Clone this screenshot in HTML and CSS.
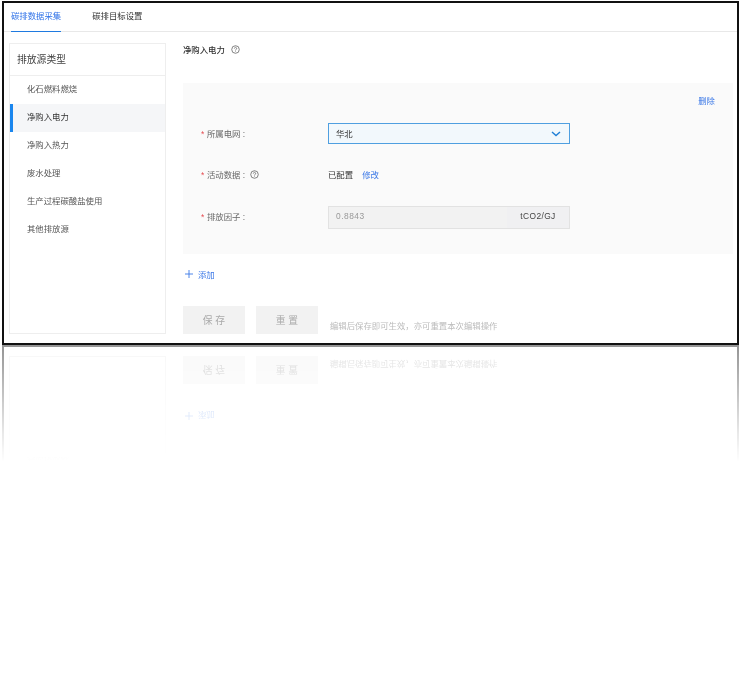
FILE: index.html
```html
<!DOCTYPE html>
<html lang="en">
<head>
<meta charset="utf-8">
<title>碳排数据采集</title>
<link rel="stylesheet" href="styles.css">
</head>
<body>
<div class="frame" id="frame">
  <nav class="tabs">
    <a class="tab tab-active">碳排数据采集</a>
    <a class="tab">碳排目标设置</a>
  </nav>
  <div class="content">
    <aside class="side">
      <div class="side-head">排放源类型</div>
      <ul class="side-list">
        <li class="side-item">化石燃料燃烧</li>
        <li class="side-item side-item-active">净购入电力</li>
        <li class="side-item">净购入热力</li>
        <li class="side-item">废水处理</li>
        <li class="side-item">生产过程碳酸盐使用</li>
        <li class="side-item">其他排放源</li>
      </ul>
    </aside>
    <main class="main">
      <div class="title-row">
        <h1 class="title">净购入电力</h1>
        <svg class="help help-title" viewBox="0 0 10 10"><circle cx="5" cy="5" r="4.2"/><path d="M3.7 3.9a1.3 1.3 0 1 1 2 1.1c-.5.3-.7.5-.7 1"/><path d="M5 7v.6"/></svg>
      </div>
      <section class="panel">
        <div class="panel-top"><a class="link">删除</a></div>
        <div class="row">
          <div class="label"><span class="star">*</span><span class="label-text">所属电网 :</span></div>
          <div class="select">
            <span class="lift">华北</span>
            <svg class="chevron" viewBox="0 0 10 6"><path d="M1 1l4 3.6L9 1"/></svg>
          </div>
        </div>
        <div class="row">
          <div class="label"><span class="star">*</span><span class="label-text">活动数据 :</span><svg class="help help-label" viewBox="0 0 10 10"><circle cx="5" cy="5" r="4.2"/><path d="M3.7 3.9a1.3 1.3 0 1 1 2 1.1c-.5.3-.7.5-.7 1"/><path d="M5 7v.6"/></svg></div>
          <span class="value lift">已配置</span>
          <a class="link link-edit lift">修改</a>
        </div>
        <div class="row row-tall">
          <div class="label"><span class="star">*</span><span class="label-text">排放因子 :</span></div>
          <div class="input">
            <span class="input-value">0.8843</span>
            <span class="input-unit">tCO2/GJ</span>
          </div>
        </div>
      </section>
      <a class="add">
        <svg class="add-icon" viewBox="0 0 8 8"><path d="M4 0v8M0 4h8"/></svg>
        <span>添加</span>
      </a>
      <div class="actions">
        <button class="btn">保 存</button>
        <button class="btn">重 置</button>
        <span class="hint">编辑后保存即可生效，亦可重置本次编辑操作</span>
      </div>
    </main>
  </div>
</div>
<script src="reflect.js"></script>
</body>
</html>
```
FILE: reflect.js
```js
var frame = document.getElementById('frame');
var mirror = document.createElement('div');
mirror.className = 'reflection';
mirror.setAttribute('aria-hidden', 'true');
var copy = frame.cloneNode(true);
copy.removeAttribute('id');
mirror.appendChild(copy);
frame.parentNode.insertBefore(mirror, frame.nextSibling);
```
FILE: styles.css
```css
* { box-sizing: border-box; }
html, body { margin: 0; padding: 0; background: #fff; }
body {
  font-family: "Liberation Sans", "Noto Sans CJK SC", sans-serif;
  font-size: 8.4px;
  color: #333;
}
.frame {
  width: 737px;
  height: 344px;
  margin: 1px 0 0 2px;
  border: 2px solid #111;
  background: #fff;
  overflow: hidden;
}
.reflection {
  width: 737px;
  height: 344px;
  margin-left: 2px;
  transform: scaleY(-1);
  -webkit-mask-image: linear-gradient(to bottom, transparent 66%, rgba(0, 0, 0, .1) 75%, rgba(0, 0, 0, .45) 100%);
  mask-image: linear-gradient(to bottom, transparent 66%, rgba(0, 0, 0, .1) 75%, rgba(0, 0, 0, .45) 100%);
}
.reflection .frame { margin: 0; }
.tabs, .content { filter: blur(.35px); }
.tabs {
  display: flex;
  gap: 31px;
  height: 29px;
  padding-left: 7px;
  border-bottom: 1px solid #e8e8e8;
}
.tab {
  height: 29px;
  line-height: 27px;
  color: #333;
}
.tab-active {
  color: #2f72e8;
  border-bottom: 1px solid #1f7ae0;
}
.content {
  display: flex;
  padding: 11px 0 0 5px;
}
.side {
  flex: none;
  width: 157px;
  height: 291px;
  border: 1px solid #eee;
}
.side-head {
  height: 32px;
  padding-left: 7px;
  line-height: 31px;
  font-size: 9.8px;
  color: #444;
  border-bottom: 1px solid #eee;
}
.side-list { margin: 0; padding: 0; list-style: none; }
.side-item {
  height: 28px;
  line-height: 27px;
  padding-left: 17px;
  color: #555;
}
.side-item-active {
  background: #f5f6f8;
  border-left: 3px solid #1a86ee;
  padding-left: 14px;
  color: #333;
}
.main { flex: 1; padding-left: 17px; min-width: 0; }
.title-row {
  display: flex;
  align-items: center;
  gap: 6px;
  height: 12px;
}
.title { margin: 0; font-size: 8.4px; font-weight: 500; color: #333; }
.help {
  flex: none;
  fill: none;
  stroke: #555;
  stroke-width: .8;
}
.help-title { width: 9px; height: 9px; }
.help-label { width: 9px; height: 9px; margin-left: 5px; }
.panel {
  width: 550px;
  height: 171px;
  margin-top: 28px;
  padding: 0 18px;
  background: #fafafa;
}
.panel-top {
  display: flex;
  justify-content: flex-end;
  height: 40px;
  padding: 11px 0 0;
}
.link { color: #3b78e7; }
.row {
  display: flex;
  align-items: center;
  height: 21px;
  margin-bottom: 20px;
}
.row:nth-child(3) { margin-bottom: 21px; }
.row-tall { height: 22.5px; margin-bottom: 0; }
.label {
  display: flex;
  align-items: center;
  flex: none;
  width: 127px;
  color: #666;
}
.label-text { padding-bottom: 2px; }
.lift { padding-bottom: 2px; }
.star { width: 6px; color: #e5484d; }
.select {
  display: flex;
  align-items: center;
  justify-content: space-between;
  width: 242px;
  height: 21px;
  padding: 0 8px 0 7px;
  background: #f2f8fc;
  border: 1px solid #4f9fe0;
  color: #333;
}
.chevron {
  width: 10px;
  height: 6px;
  fill: none;
  stroke: #1f7fd6;
  stroke-width: 1.4;
}
.value { color: #333; }
.link-edit { margin-left: 9px; }
.input {
  display: flex;
  width: 242px;
  height: 22.5px;
  background: #f2f2f2;
  border: 1px solid #e2e2e2;
}
.input-value {
  flex: 1;
  padding-left: 7px;
  line-height: 18px;
  letter-spacing: .5px;
  color: #999;
}
.input-unit {
  flex: none;
  width: 62px;
  text-align: center;
  line-height: 18px;
  letter-spacing: .4px;
  background: #f0f0f2;
  color: #444;
}
.add {
  display: flex;
  align-items: center;
  gap: 5px;
  height: 12px;
  margin: 14px 0 0 2px;
  color: #3b78e7;
}
.add-icon {
  width: 8px;
  height: 8px;
  fill: none;
  stroke: #3b78e7;
  stroke-width: .9;
}
.actions {
  display: flex;
  align-items: flex-end;
  gap: 11px;
  margin-top: 26px;
}
.btn {
  width: 62px;
  height: 27.5px;
  padding: 0;
  border: 0;
  background: #f2f2f2;
  color: #aaa;
  font: inherit;
  font-size: 9.8px;
}
.hint { color: #bbb; line-height: 12px; margin-left: 1px; padding-bottom: 2px; }
```
